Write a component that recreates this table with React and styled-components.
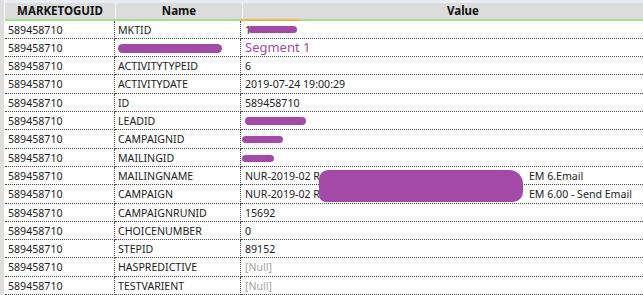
import styled, { createGlobalStyle } from "styled-components";

const GlobalStyle = createGlobalStyle`
  html, body {
    margin: 0;
    padding: 0;
    background: #ffffff;
    overflow: hidden;
  }
  body {
    font-family: "Noto Sans", "Open Sans", sans-serif;
  }
`;

const COLUMNS = "110px 126px 1fr";
const PURPLE = "#a34aa6";

const Page = styled.div`
  display: flex;
  width: 643px;
  height: 295px;
  overflow: hidden;
`;

const Gutter = styled.div`
  width: 4px;
  flex: none;
  background: #dedede;
  border-right: 1px solid #ffffff;
`;

const Grid = styled.div`
  flex: 1;
  display: flex;
  flex-direction: column;
  position: relative;
`;

const TopBand = styled.div`
  height: 3px;
  background: #e9eef6;
`;

const HeaderRow = styled.div`
  display: grid;
  grid-template-columns: ${COLUMNS};
  column-gap: 1px;
  background: #ffffff;
  height: 16px;
`;

const HeaderCell = styled.div`
  background: #dcdcdc;
  font-size: 11.5px;
  font-weight: 700;
  color: #111;
  line-height: 16px;
  text-align: center;
  padding-left: ${(p) => p.$shift || 0}px;
  white-space: nowrap;
`;

const HeaderRule = styled.div`
  height: 2px;
  background: linear-gradient(
    to right,
    #a6df8d 236px,
    #e5b84b 236px,
    #e5b84b 295px,
    #a6df8d 295px
  );
`;

const Body = styled.div`
  position: relative;
  display: grid;
  grid-template-columns: ${COLUMNS};
  grid-auto-rows: 18.3px;
`;

const Cell = styled.div`
  position: relative;
  box-sizing: border-box;
  border-bottom: 1px dotted #4a4a4a;
  border-right: ${(p) => (p.$last ? "none" : "1px dotted #4a4a4a")};
  padding: 1px 0 0 ${(p) => (p.$last ? 4 : 3)}px;
  font-size: 10.6px;
  line-height: 16px;
  color: ${(p) => (p.$muted ? "#a3a3a3" : "#1c1c1c")};
  white-space: nowrap;
  overflow: hidden;
`;

const Segment = styled.span`
  color: ${PURPLE};
  font-size: 13px;
  line-height: 16px;
  position: relative;
  top: -1px;
`;

const Hidden = styled.span`
  display: inline-block;
  width: ${(p) => p.$w}px;
`;

const Smudge = styled.span`
  position: absolute;
  left: ${(p) => p.$x}px;
  top: ${(p) => p.$y}px;
  width: ${(p) => p.$w}px;
  height: ${(p) => p.$h}px;
  background: ${PURPLE};
  border-radius: ${(p) => p.$h / 2}px;
`;

const BigSmudge = styled.div`
  position: absolute;
  left: 314px;
  top: 149px;
  width: 204px;
  height: 32px;
  background: ${PURPLE};
  border-radius: 9px 14px 10px 7px;
`;

const rows = [
  { name: "MKTID", value: <>1<Smudge $x={7} $y={5} $w={49} $h={7} /></> },
  {
    name: <Smudge $x={3} $y={5} $w={104} $h={9} />,
    value: <Segment>Segment 1</Segment>,
  },
  { name: "ACTIVITYTYPEID", value: "6" },
  { name: "ACTIVITYDATE", value: "2019-07-24 19:00:29" },
  { name: "ID", value: "589458710" },
  { name: "LEADID", value: <>16<Smudge $x={4} $y={5} $w={61} $h={8} /></> },
  { name: "CAMPAIGNID", value: <Smudge $x={1} $y={6} $w={41} $h={7} /> },
  { name: "MAILINGID", value: <Smudge $x={1} $y={6} $w={32} $h={7} /> },
  {
    name: "MAILINGNAME",
    value: <>NUR-2019-02 R<Hidden $w={209} />EM 6.Email</>,
  },
  {
    name: "CAMPAIGN",
    value: <>NUR-2019-02 R<Hidden $w={209} />EM 6.00 - Send Email</>,
  },
  { name: "CAMPAIGNRUNID", value: "15692" },
  { name: "CHOICENUMBER", value: "0" },
  { name: "STEPID", value: "89152" },
  { name: "HASPREDICTIVE", value: "[Null]", muted: true },
  { name: "TESTVARIENT", value: "[Null]", muted: true },
];

export default function App() {
  return (
    <>
      <GlobalStyle />
      <Page>
        <Gutter />
        <Grid>
          <TopBand />
          <HeaderRow>
            <HeaderCell>MARKETOGUID</HeaderCell>
            <HeaderCell>Name</HeaderCell>
            <HeaderCell $shift={40}>Value</HeaderCell>
          </HeaderRow>
          <HeaderRule />
          <Body>
            {rows.map((row, i) => (
              <Row key={i} row={row} />
            ))}
            <BigSmudge />
          </Body>
        </Grid>
      </Page>
    </>
  );
}

function Row({ row }) {
  return (
    <>
      <Cell>589458710</Cell>
      <Cell>{row.name}</Cell>
      <Cell $last $muted={row.muted}>
        {row.value}
      </Cell>
    </>
  );
}
